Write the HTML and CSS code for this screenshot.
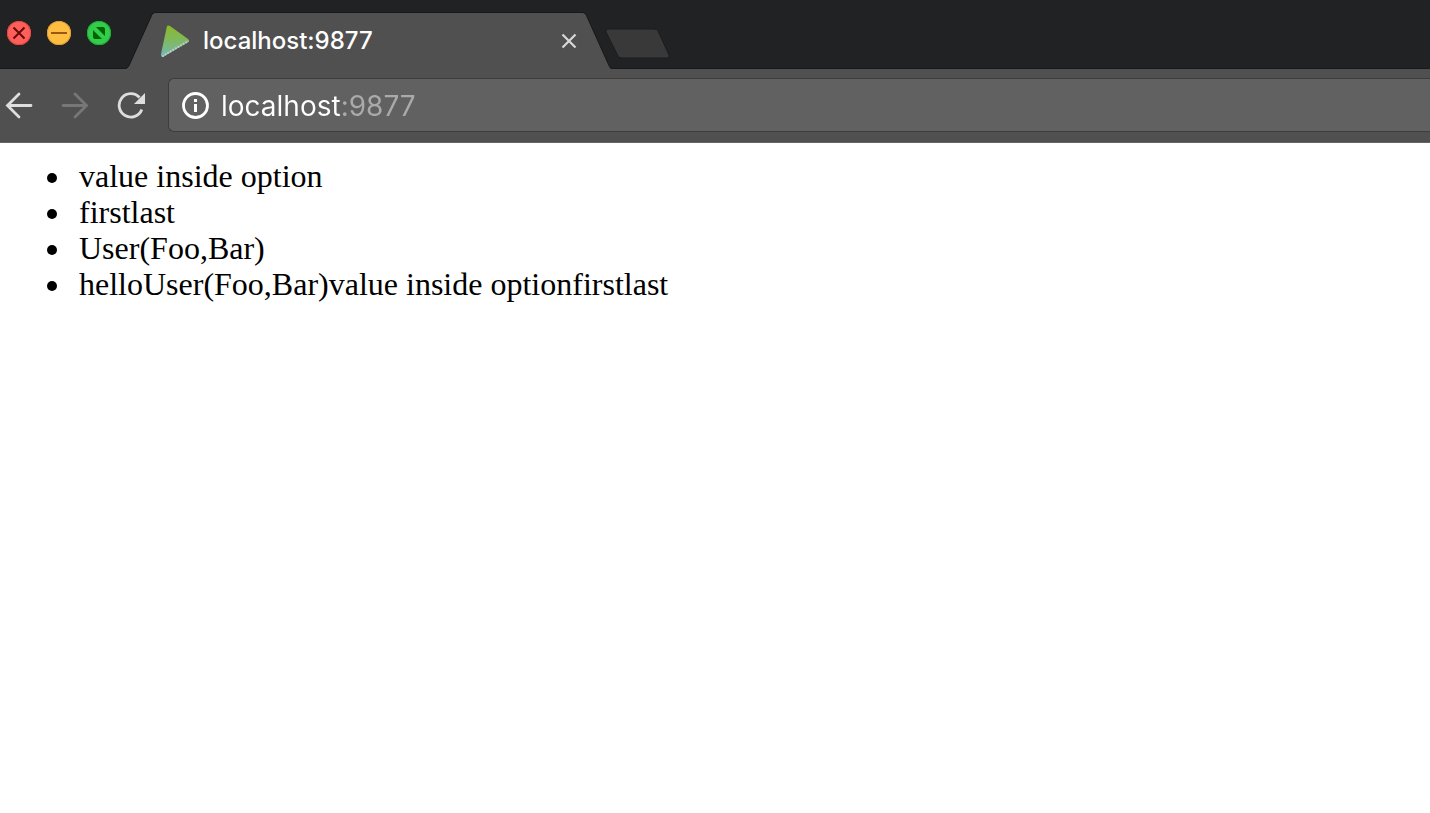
FILE: index.html
```html
<!DOCTYPE html>
<html lang="en">
<head>
<meta charset="utf-8">
<title>localhost:9877</title>
<link rel="stylesheet" href="styles.css">
</head>
<body>
<header class="browser">
  <div class="tab-strip">
    <div class="window-controls">
      <button class="control close" aria-label="Close window"><svg viewBox="0 0 24 24"><path d="M6.500 6.500l11 11M17.500 6.500l-11 11" stroke="#640b0b" stroke-width="2"/></svg></button>
      <button class="control minimize" aria-label="Minimize window"><svg viewBox="0 0 24 24"><path d="M4 12h16" stroke="#985712" stroke-width="2"/></svg></button>
      <button class="control maximize" aria-label="Full screen"><svg viewBox="0 0 24 24"><path d="M9 6h7q2 0 2 2v7zM6 9l9 9H8q-2 0-2-2z" fill="#006400"/></svg></button>
    </div>
    <div class="tab">
      <svg class="tab-shape" viewBox="0 0 486 57" preserveAspectRatio="none"><path d="M0 57q2-1 3-3L26 3q1-2 3-2H457q2 0 3 2l23 51q1 2 2 3z" fill="#505050"/><path d="M0 56.500q2-1 3-3L26 2.500q1-2 3-2H457q2 0 3 2l23 51q1 2 2 3" fill="none" stroke="#18191a"/></svg>
      <svg class="favicon" viewBox="0 0 32 32"><defs><linearGradient id="leaf" x1="0" y1="0" x2="0" y2="1"><stop stop-color="#89ba2b"/><stop offset=".45" stop-color="#80b95c"/><stop offset="1" stop-color="#70b9b4"/></linearGradient></defs><path d="M6 1q1-1 3 0l18 13q2 2 0 3L2 32q-2 0-2-3z" fill="url(#leaf)"/><path d="M1 31.500L27.500 16" stroke="#c1cdca" stroke-width="2" stroke-dasharray="2 1"/></svg>
      <span class="tab-title">localhost:9877</span>
      <button class="tab-close" aria-label="Close tab"><svg viewBox="0 0 16 16"><path d="M1.500 1.500l13 13M14.500 1.500l-13 13" stroke="#d8d8d8" stroke-width="2.200"/></svg></button>
    </div>
    <button class="new-tab" aria-label="New tab"><svg viewBox="0 0 66 32"><path d="M4 1H50q3 0 4 2l11 24q1 3-1 3H18q-3 0-4-2L2 4q-1-3 2-3z" fill="#393939" stroke="#1b1c1d"/></svg></button>
  </div>
  <div class="toolbar">
    <nav class="navigation">
      <button class="nav-button" aria-label="Back"><svg viewBox="0 0 28 28"><path d="M26 14.500H3M14 3L2.500 14.500 14 26" fill="none" stroke="#dedede" stroke-width="2.800" stroke-linecap="round"/></svg></button>
      <button class="nav-button" aria-label="Forward"><svg viewBox="0 0 28 28"><path d="M2 14.500h23M14 3l11.500 11.500L14 26" fill="none" stroke="#777" stroke-width="2.800" stroke-linecap="round"/></svg></button>
      <button class="nav-button" aria-label="Reload"><svg viewBox="0 0 28 28"><path d="M22.500 6.500A11.700 11.700 0 1 0 24.800 18.500" fill="none" stroke="#dedede" stroke-width="2.800"/><path d="M28 2v11H17z" fill="#dedede"/></svg></button>
    </nav>
    <div class="address-bar">
      <button class="site-info" aria-label="Site information"><svg viewBox="0 0 28 28"><circle cx="14.500" cy="14.500" r="12" fill="none" stroke="#fff" stroke-width="2.800"/><path d="M13 8h3v3h-3zM13 13h3v8h-3z" fill="#fff"/></svg></button>
      <input class="address" type="text" aria-label="Address" value="localhost:9877" spellcheck="false">
    </div>
  </div>
</header>
<main class="page">
  <ul class="values">
    <li>value inside option</li>
    <li>firstlast</li>
    <li>User(Foo,Bar)</li>
    <li>helloUser(Foo,Bar)value inside optionfirstlast</li>
  </ul>
</main>
</body>
</html>
```
FILE: styles.css
```css
* { box-sizing: border-box; }
body { margin: 0; background: #fff; font-family: Inter, sans-serif; }
button { border: 0; padding: 0; background: none; flex: none; }
svg { display: block; width: 100%; height: 100%; }

.tab-strip {
  display: flex;
  align-items: flex-end;
  height: 69px;
  background: #212224;
  box-shadow: inset 0 -1px #18191a;
}
.window-controls { display: flex; gap: 16px; padding: 0 15px 24px 7px; }
.control { width: 24px; height: 24px; border-radius: 50%; }
.close { background: #ff5f5b; box-shadow: inset 0 0 0 1px #e3483f; }
.minimize { background: #ffbe42; box-shadow: inset 0 0 0 1px #dfa032; }
.maximize { background: #34cc4b; box-shadow: inset 0 0 0 1px #20ad32; }

.tab {
  position: relative;
  display: flex;
  align-items: center;
  width: 486px;
  height: 57px;
  padding: 0 35px;
}
.tab-shape { position: absolute; inset: 0; }
.favicon { position: relative; width: 32px; height: 32px; flex: none; }
.tab-title {
  position: relative;
  flex: 1;
  padding-left: 10px;
  color: #fff;
  font-size: 24px;
  font-weight: 500;
  line-height: 32px;
}
.tab-close { position: relative; width: 16px; height: 16px; }
.new-tab { width: 66px; height: 32px; margin: 0 0 9px -8px; }

.toolbar {
  display: flex;
  align-items: center;
  height: 74px;
  padding: 0 0 2px 5px;
  background: #505050;
  border-bottom: 1px solid #656565;
}
.navigation { display: flex; gap: 28px; padding-right: 23px; }
.nav-button { width: 28px; height: 28px; }
.address-bar {
  display: flex;
  flex: 1;
  align-items: center;
  gap: 12px;
  height: 54px;
  padding-left: 12px;
  background: #616161;
  border: 1px solid #3d3d3d;
  border-right: 0;
  border-radius: 6px 0 0 6px;
}
.site-info { width: 28px; height: 28px; }
.address {
  flex: 1;
  min-width: 0;
  height: 42px;
  padding: 2px 0 0;
  border: 0;
  outline: 0;
  font: 400 28px/40px Inter, sans-serif;
  color: transparent;
  background: linear-gradient(to right, #fff 120px, #aaa 120px);
  -webkit-background-clip: text;
  background-clip: text;
}

.page {
  padding: 15px 8px;
  color: #000;
  font-family: "Liberation Serif", serif;
  font-size: 32px;
  line-height: 36px;
  text-rendering: optimizeLegibility;
  font-variant-ligatures: common-ligatures;
}
.values { margin: 0; padding-left: 39px; list-style: none; }
.values li { display: flex; align-items: center; gap: 22px; }
.values li::before {
  content: "";
  flex: none;
  width: 10px;
  height: 10px;
  margin-top: 3px;
  border-radius: 50%;
  background: #000;
}
```
